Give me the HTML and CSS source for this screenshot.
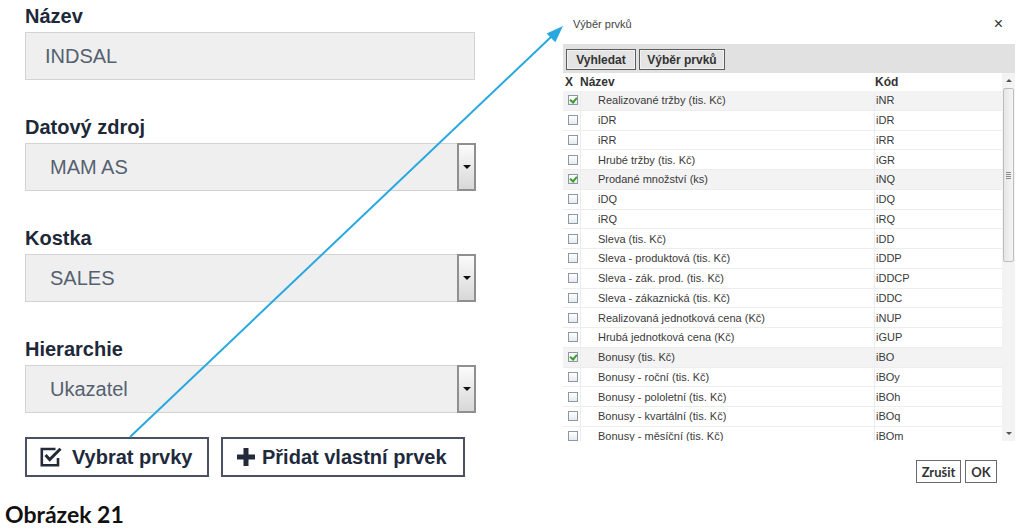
FILE: index.html
```html
<!DOCTYPE html>
<html lang="cs">
<head>
    <meta charset="UTF-8">
    <title>Výběr prvků</title>
    <link rel="stylesheet" href="styles.css">
</head>
<body>
    <div class="page">
        <div class="form">
            <div class="field">
                <label class="field-label">Název</label>
                <div class="input">INDSAL</div>
            </div>
            <div class="field">
                <label class="field-label">Datový zdroj</label>
                <div class="input select">
                    <span>MAM AS</span>
                    <span class="select-btn"><i class="caret"></i></span>
                </div>
            </div>
            <div class="field">
                <label class="field-label">Kostka</label>
                <div class="input select">
                    <span>SALES</span>
                    <span class="select-btn"><i class="caret"></i></span>
                </div>
            </div>
            <div class="field">
                <label class="field-label">Hierarchie</label>
                <div class="input select">
                    <span>Ukazatel</span>
                    <span class="select-btn"><i class="caret"></i></span>
                </div>
            </div>
            <div class="actions">
                <button class="action-btn">
                    <svg width="22" height="20" viewBox="0 0 22 20">
                        <path d="M15.5 2H1.8v16.2H18V11" fill="none" stroke="#232b3a" stroke-width="2.6"/>
                        <path d="M5.5 8l4.2 4.6L20.5 1.8" fill="none" stroke="#232b3a" stroke-width="3"/>
                    </svg>
                    Vybrat prvky
                </button>
                <button class="action-btn">
                    <svg width="20" height="18" viewBox="0 0 20 18">
                        <path d="M10 0v18M1 9h18" stroke="#232b3a" stroke-width="5"/>
                    </svg>
                    Přidat vlastní prvek
                </button>
            </div>
        </div>

        <div class="dialog">
            <div class="dialog-title">
                <span>Výběr prvků</span>
                <span class="close">×</span>
            </div>
            <div class="toolbar">
                <button class="tool-btn">Vyhledat</button>
                <button class="tool-btn">Výběr prvků</button>
            </div>
            <div class="grid">
                <div class="table">
                    <div class="row head">
                        <div class="c-check">X</div>
                        <div class="c-name">Název</div>
                        <div class="c-code">Kód</div>
                    </div>
                    <div class="row selected"><div class="c-check"><i class="cb on"></i></div><div class="c-name">Realizované tržby (tis. Kč)</div><div class="c-code">iNR</div></div>
                    <div class="row"><div class="c-check"><i class="cb"></i></div><div class="c-name">iDR</div><div class="c-code">iDR</div></div>
                    <div class="row"><div class="c-check"><i class="cb"></i></div><div class="c-name">iRR</div><div class="c-code">iRR</div></div>
                    <div class="row"><div class="c-check"><i class="cb"></i></div><div class="c-name">Hrubé tržby (tis. Kč)</div><div class="c-code">iGR</div></div>
                    <div class="row selected"><div class="c-check"><i class="cb on"></i></div><div class="c-name">Prodané množství (ks)</div><div class="c-code">iNQ</div></div>
                    <div class="row"><div class="c-check"><i class="cb"></i></div><div class="c-name">iDQ</div><div class="c-code">iDQ</div></div>
                    <div class="row"><div class="c-check"><i class="cb"></i></div><div class="c-name">iRQ</div><div class="c-code">iRQ</div></div>
                    <div class="row"><div class="c-check"><i class="cb"></i></div><div class="c-name">Sleva (tis. Kč)</div><div class="c-code">iDD</div></div>
                    <div class="row"><div class="c-check"><i class="cb"></i></div><div class="c-name">Sleva - produktová (tis. Kč)</div><div class="c-code">iDDP</div></div>
                    <div class="row"><div class="c-check"><i class="cb"></i></div><div class="c-name">Sleva - zák. prod. (tis. Kč)</div><div class="c-code">iDDCP</div></div>
                    <div class="row"><div class="c-check"><i class="cb"></i></div><div class="c-name">Sleva - zákaznická (tis. Kč)</div><div class="c-code">iDDC</div></div>
                    <div class="row"><div class="c-check"><i class="cb"></i></div><div class="c-name">Realizovaná jednotková cena (Kč)</div><div class="c-code">iNUP</div></div>
                    <div class="row"><div class="c-check"><i class="cb"></i></div><div class="c-name">Hrubá jednotková cena (Kč)</div><div class="c-code">iGUP</div></div>
                    <div class="row selected"><div class="c-check"><i class="cb on"></i></div><div class="c-name">Bonusy (tis. Kč)</div><div class="c-code">iBO</div></div>
                    <div class="row"><div class="c-check"><i class="cb"></i></div><div class="c-name">Bonusy - roční (tis. Kč)</div><div class="c-code">iBOy</div></div>
                    <div class="row"><div class="c-check"><i class="cb"></i></div><div class="c-name">Bonusy - pololetní (tis. Kč)</div><div class="c-code">iBOh</div></div>
                    <div class="row"><div class="c-check"><i class="cb"></i></div><div class="c-name">Bonusy - kvartální (tis. Kč)</div><div class="c-code">iBOq</div></div>
                    <div class="row"><div class="c-check"><i class="cb"></i></div><div class="c-name">Bonusy - měsíční (tis. Kč)</div><div class="c-code">iBOm</div></div>
                </div>
                <div class="scrollbar">
                    <div class="arrow-up"></div>
                    <div class="thumb"><i class="grip"></i></div>
                    <div class="track"></div>
                    <div class="arrow-down"></div>
                </div>
            </div>
            <div class="dialog-footer">
                <button class="foot-btn">Zrušit</button>
                <button class="foot-btn">OK</button>
            </div>
        </div>
    </div>

    <div class="caption">Obrázek 21</div>

    <svg class="pointer" width="1024" height="530" viewBox="0 0 1024 530">
        <line x1="130" y1="437" x2="552" y2="36" stroke="#29a8df" stroke-width="2"/>
        <polygon points="563,26 555.3,42.2 546.6,33.5" fill="#29a8df"/>
    </svg>
</body>
</html>
```

FILE: styles.css
```css
* {
    margin: 0;
    padding: 0;
    box-sizing: border-box;
}

body {
    position: relative;
    width: 1024px;
    height: 530px;
    overflow: hidden;
    background: #fff;
    font-family: "Liberation Sans", Arial, sans-serif;
}

button {
    font-family: inherit;
    background: none;
    cursor: pointer;
    white-space: nowrap;
}

.page {
    display: flex;
    padding: 4px 0 0 25px;
}

/* levý formulář */
.form {
    width: 450px;
}

.field + .field {
    margin-top: 35px;
}

.field-label {
    display: block;
    height: 24px;
    line-height: 24px;
    margin-bottom: 4px;
    font-size: 20px;
    font-weight: bold;
    color: #1d2838;
}

.input {
    display: flex;
    align-items: center;
    height: 48px;
    padding-left: 19px;
    background: #efefef;
    border: 1px solid #d3d3d3;
    font-size: 20px;
    color: #556170;
}

.select {
    justify-content: space-between;
    padding-left: 24px;
}

.select-btn {
    display: flex;
    align-items: center;
    justify-content: center;
    width: 19px;
    height: 48px;
    margin: -1px -2px 0 0;
    border: 2px solid #8f8f8f;
    background: linear-gradient(#fbfbfb, #d8d8d8);
}

.caret {
    width: 0;
    height: 0;
    border-left: 4px solid transparent;
    border-right: 4px solid transparent;
    border-top: 4px solid #111;
}

.actions {
    display: flex;
    gap: 12px;
    margin-top: 24px;
}

.action-btn {
    display: flex;
    align-items: center;
    gap: 10px;
    height: 40px;
    padding: 0 13px;
    border: 2px solid #4a5161;
    font-size: 20px;
    font-weight: bold;
    color: #1e2a3b;
}

.action-btn svg {
    flex-shrink: 0;
}

.action-btn:first-child {
    width: 184px;
}

.action-btn:last-child {
    gap: 6px;
    width: 244px;
}

/* dialog */
.dialog {
    width: 452px;
    margin-left: 88px;
}

.dialog-title {
    display: flex;
    justify-content: space-between;
    align-items: center;
    height: 40px;
    padding: 0 12px 0 10px;
    font-size: 11px;
    color: #444;
}

.close {
    font-size: 16px;
    color: #333;
}

.toolbar {
    display: flex;
    gap: 3px;
    height: 29px;
    padding: 5px 3px 3px;
    background: #e1e1e1;
}

.tool-btn {
    height: 21px;
    padding: 0;
    border: 1px solid #5c5c5c;
    box-shadow: inset 0 0 0 1px #f2f2f2;
    background: #e4e4e4;
    font-size: 12px;
    font-weight: bold;
    color: #333;
}

.tool-btn:first-child {
    width: 70px;
}

.tool-btn:last-child {
    width: 86px;
}

.grid {
    display: flex;
    height: 368px;
}

.table {
    flex: 1;
    overflow: hidden;
    font-size: 11px;
    color: #3a3a3a;
}

.row {
    display: flex;
    align-items: stretch;
    height: 19.75px;
    border-bottom: 1px solid #ededed;
}

.row.head {
    height: 18px;
    border-bottom: none;
    font-size: 12px;
    font-weight: bold;
    color: #333;
}

.row.selected {
    background: #f3f3f3;
}

.row > div {
    display: flex;
    align-items: center;
}

.c-check {
    width: 17px;
    padding-left: 5px;
}

.head .c-check {
    padding-left: 2px;
}

.c-name {
    width: 294px;
    padding-left: 17px;
    border-left: 1px solid #ececec;
}

.head .c-name {
    padding-left: 0;
    border-left: none;
}

.c-code {
    flex: 1;
    padding-left: 1px;
    border-left: 1px solid #ececec;
}

.head .c-code {
    border-left: none;
}

.cb {
    position: relative;
    display: block;
    width: 10px;
    height: 10px;
    border: 1px solid #8c98a5;
    background: linear-gradient(#fff, #e6ebef);
}

.cb.on::after {
    content: "";
    position: absolute;
    left: 2px;
    top: 0;
    width: 3px;
    height: 5px;
    border-right: 2px solid #3f9b2e;
    border-bottom: 2px solid #3f9b2e;
    transform: rotate(40deg);
}

.scrollbar {
    display: flex;
    flex-direction: column;
    width: 13px;
    background: #f3f3f3;
}

.arrow-up,
.arrow-down {
    display: flex;
    justify-content: center;
    align-items: center;
    height: 15px;
}

.arrow-up::before,
.arrow-down::before {
    content: "";
    border-left: 3px solid transparent;
    border-right: 3px solid transparent;
}

.arrow-up::before {
    border-bottom: 3px solid #555;
}

.arrow-down::before {
    border-top: 3px solid #555;
}

.thumb {
    display: flex;
    justify-content: center;
    align-items: center;
    height: 174px;
    margin: 0 1px;
    border: 1px solid #bdbdbd;
    border-radius: 2px;
    background: linear-gradient(to right, #e6e6e6, #f5f5f5);
}

.grip {
    width: 5px;
    height: 7px;
    background: repeating-linear-gradient(#8a8a8a 0 1px, transparent 1px 2px);
}

.track {
    flex: 1;
}

.dialog-footer {
    display: flex;
    justify-content: flex-end;
    gap: 4px;
    padding: 19px 18px 0 0;
}

.foot-btn {
    height: 23px;
    border: 1px solid #6a6a6a;
    box-shadow: inset 0 0 0 1px #fff;
    background: #fff;
    font-family: Lato, "Open Sans", sans-serif;
    font-size: 13px;
    font-weight: bold;
    color: #333;
}

.foot-btn:first-child {
    width: 45px;
}

.foot-btn:last-child {
    width: 32px;
}

.caption {
    padding: 17px 0 0 5px;
    font-family: Lato, "Open Sans", sans-serif;
    font-size: 23px;
    font-weight: bold;
    color: #111;
}

/* šipka přes obsah */
.pointer {
    position: absolute;
    top: 0;
    left: 0;
    pointer-events: none;
}
```
